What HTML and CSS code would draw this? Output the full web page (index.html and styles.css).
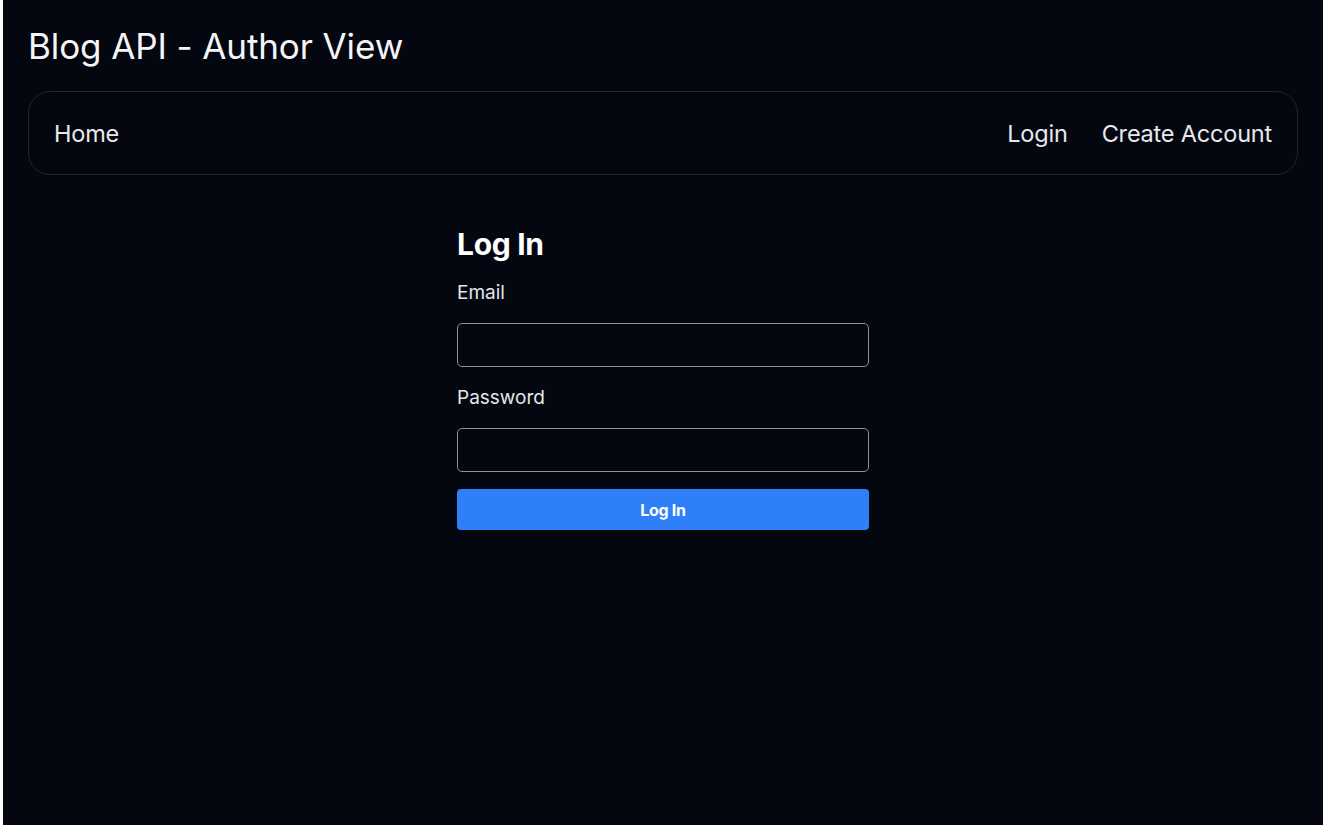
FILE: index.html
```html
<!DOCTYPE html>
<html lang="en">
<head>
<meta charset="utf-8">
<title>Blog API - Author View</title>
<link rel="stylesheet" href="styles.css">
</head>
<body>
<div class="page">
  <h1 class="site-title">Blog API - Author View</h1>
  <nav class="navbar">
    <a class="nav-link" href="#">Home</a>
    <div class="nav-right">
      <a class="nav-link" href="#">Login</a>
      <a class="nav-link" href="#">Create Account</a>
    </div>
  </nav>
  <main class="content">
    <form class="login-form">
      <h2 class="form-title">Log In</h2>
      <label class="field-label" for="email">Email</label>
      <input class="field-input" id="email" type="email">
      <label class="field-label" for="password">Password</label>
      <input class="field-input" id="password" type="password">
      <button class="submit-btn" type="button">Log In</button>
    </form>
  </main>
</div>
</body>
</html>
```
FILE: styles.css
```css
html {
  background: #ffffff;
}
body {
  margin: 0 3px;
  min-height: 100vh;
  background: #04070f;
  color: #ffffff;
  font-family: Inter, "Noto Sans", sans-serif;
}
.page {
  padding: 24px 25px 0 25px;
}
.site-title {
  margin: 0;
  font-size: 35px;
  font-weight: 400;
  line-height: 44px;
  letter-spacing: -0.1px;
  color: #f4f5f7;
}
.navbar {
  margin-top: 23px;
  height: 84px;
  box-sizing: border-box;
  border: 1px solid #23262f;
  border-radius: 22px;
  display: flex;
  align-items: center;
  justify-content: space-between;
  padding: 0 25px;
}
.nav-right {
  display: flex;
  gap: 34px;
}
.nav-link {
  color: #e8eaee;
  text-decoration: none;
  font-size: 23.5px;
  letter-spacing: -0.2px;
}
.content {
  display: flex;
  justify-content: center;
  padding-top: 52px;
}
.login-form {
  width: 412px;
  display: flex;
  flex-direction: column;
}
.form-title {
  margin: 0 0 21px 0;
  font-size: 30px;
  font-weight: 700;
  line-height: 34px;
  letter-spacing: -0.3px;
}
.field-label {
  font-size: 19px;
  line-height: 22px;
  color: #e4e6ea;
  margin-bottom: 19px;
}
.field-input {
  height: 44px;
  box-sizing: border-box;
  background: #04070f;
  border: 1.5px solid #8d9098;
  border-radius: 5px;
  margin-bottom: 20px;
  color: #fff;
}
#password {
  margin-bottom: 17px;
}
.submit-btn {
  height: 41px;
  border: none;
  border-radius: 4px;
  background: #2f7ff8;
  color: #ffffff;
  font-family: Inter, "Noto Sans", sans-serif;
  font-size: 16px;
  font-weight: 700;
  letter-spacing: -0.3px;
}
```
